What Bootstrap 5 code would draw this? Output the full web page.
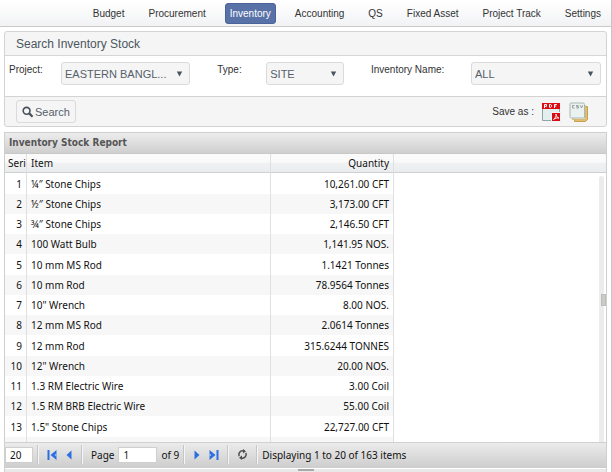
<!DOCTYPE html>
<html lang="en">
<head>
<meta charset="utf-8">
<meta name="viewport" content="width=device-width, initial-scale=1">
<title>Inventory Stock</title>
<link href="https://cdn.jsdelivr.net/npm/bootstrap@5.3.0/dist/css/bootstrap.min.css" rel="stylesheet">
<style>
body{font-family:"Liberation Sans",Arial,sans-serif;font-size:10px;line-height:14px;color:#3c3c3c;background:#fff}
.app{border-right:1px solid #c4c4c4}
.topnav{background:linear-gradient(#fff 10%,#f1f2f4);border-bottom:1px solid #c9c9c9;padding:3px 5px 2px}
.topnav .nav{gap:14px}
.topnav .nav-link{color:#333;padding:3px 4px 2px;border:1px solid transparent;border-radius:3px;line-height:14px}
.topnav .nav-link.active{background:#5872a7;color:#fff;border-color:#4a639a}
.work{padding:4px 4px 0;gap:5px}
.finder{border:1px solid #d3d3d3;border-radius:3px;background:#f5f5f5;color:#333}
.finder h1{font-size:12px;line-height:22px;padding:1px 11px 0;margin:0;font-weight:400;color:#4b5560;border-bottom:1px solid #d6d6d6}
.fields{display:grid;grid-template-columns:210fr 155fr 232fr;background:#fff;padding:6px 5px 11px 4px;border-bottom:1px solid #d3d3d3}
.fields label{padding-top:1px;flex:none}
.l-project{width:52px}.l-type{width:49px}.l-name{width:100px}
.fields select,.btn-find{font-size:11px;line-height:14px;color:#555f6b;border:1px solid #dadada;border-radius:3px;background-color:#f5f5f5}
.fields select{appearance:none;height:23px;padding:0 20px 0 3px;text-overflow:ellipsis;min-width:0;background-repeat:no-repeat;background-position:right 6px center;background-image:url("data:image/svg+xml,%3Csvg xmlns='http://www.w3.org/2000/svg' width='7' height='6'%3E%3Cpath d='M0.8 0.5h5.4L3.5 5.5z' fill='%23475563'/%3E%3C/svg%3E")}
.w-project{width:129px}.w-type{width:78px}
.actions{padding:3px 17px 3px 11px}
.btn-find{padding:3px 5px;height:23px;gap:1px}
.saveas{gap:8px}
.saveas a{line-height:0}
.report{border:1px solid #cfcfcf;border-bottom:0;min-height:0}
.report,.report input{font-family:"Noto Sans",Tahoma,sans-serif;color:#111}
.report h2{font-family:"DejaVu Sans Condensed","DejaVu Sans",sans-serif;font-size:10px;line-height:20px;font-weight:700;margin:0;padding:0 4px;color:#555;background:linear-gradient(#ededed,#cfcfcf);border-bottom:1px solid #c8c8c8}
.rows{overflow:hidden;min-height:0;position:relative}
.stock{table-layout:fixed;width:100%;border-collapse:separate;border-spacing:0}
.stock th,.stock td{padding:0 4px;height:20px;line-height:18px;white-space:nowrap;overflow:hidden;border-right:1px solid #e0e0e0}
.stock td{background:#fff}
.stock th{font-weight:400;height:19px;background:linear-gradient(#fafafa 45%,#f0f1f2 50%,#ebecee);border-bottom:1px solid #d0d0d0}
.stock tbody tr:nth-child(4n+1) td{height:21px}
.stock tbody tr:nth-child(even) td{background:#f7f7f7}
.stock th:last-child,.stock td:last-child{border-right:0}
.stock tbody tr td:last-child{background:#fff}
.stock th.serial{padding:0 0 0 3px}
.c-serial{width:22px}.c-item{width:244px}.c-qty{width:123px}
.track{position:absolute;top:22px;right:2px;bottom:0;width:5px;background:#ececec;border-radius:3px 3px 0 0}
.grip{position:absolute;top:140px;right:0;width:5px;height:12px;background:#cdcbc5;border:1px solid #bfbdb7}
.pager{background:linear-gradient(#ebebeb,#cdcdcd);border-top:1px solid #d0d0d0;padding:2px 1px 4px 0}
.pager input{font-size:10px;line-height:12px;height:16px;padding:0 4px;border:1px solid #cfcfcf;background:#fff}
.pager .size{width:28px}.pager .page{width:39px}
.pager .split{width:2px;height:19px;border-left:1px solid #c6c6c6;border-right:1px solid #f5f5f5}
.pager button{line-height:0;padding:0;border:0;background:none}
.resizer{height:4px;background:#e9e9e9;border-top:1px solid #fff}
.resizer span{width:16px;height:2px;background:#a9a9a9}
</style>
</head>
<body>
<div class="app d-flex flex-column vh-100">
  <nav class="topnav">
    <ul class="nav justify-content-end flex-nowrap">
      <li><a class="nav-link" href="#">Budget</a></li>
      <li><a class="nav-link" href="#">Procurement</a></li>
      <li><a class="nav-link active" href="#" aria-current="page">Inventory</a></li>
      <li><a class="nav-link" href="#">Accounting</a></li>
      <li><a class="nav-link" href="#">QS</a></li>
      <li><a class="nav-link text-nowrap" href="#">Fixed Asset</a></li>
      <li><a class="nav-link text-nowrap" href="#">Project Track</a></li>
      <li><a class="nav-link" href="#">Settings</a></li>
    </ul>
  </nav>
  <main class="work d-flex flex-column flex-fill overflow-hidden">
    <form class="finder">
      <h1>Search Inventory Stock</h1>
      <div class="fields">
        <div class="d-flex align-items-start">
          <label class="l-project" for="project">Project:</label>
          <select id="project" class="w-project"><option>EASTERN BANGL...</option></select>
        </div>
        <div class="d-flex align-items-start">
          <label class="l-type" for="type">Type:</label>
          <select id="type" class="w-type"><option>SITE</option></select>
        </div>
        <div class="d-flex align-items-start">
          <label class="l-name" for="name">Inventory Name:</label>
          <select id="name" class="flex-fill"><option>ALL</option></select>
        </div>
      </div>
      <div class="actions d-flex align-items-center justify-content-between">
        <button type="button" class="btn btn-find d-flex align-items-center">
          <svg width="12" height="12" viewBox="0 0 12 12" aria-hidden="true"><circle cx="4.6" cy="4.8" r="3.4" fill="none" stroke="#46505b" stroke-width="1.6"/><path d="M7.2 7.4l3.4 3.4" stroke="#46505b" stroke-width="2.2"/></svg>
          Search
        </button>
        <div class="saveas d-flex align-items-center">
          <span>Save as :</span>
          <a href="#" aria-label="Save as PDF"><svg width="19" height="20" viewBox="0 0 19 20"><path d="M.5 1.5h17v17h-17z" fill="#e3eeee" stroke="#8ea5a5"/><path d="M0 1h18v6H0z" fill="#dd0d12"/><path d="M2.500 6v-3.500h2v1.800h-2M7.500 5.300v-2.800h1.300l.7.7v1.400l-.7.7zM12.500 6v-3.500h2.300M12.500 4h1.800" fill="none" stroke="#fff" stroke-width="1"/><path d="M9.500 10.500h9v9h-9z" fill="#d90c12" stroke="#f2f5f5"/><path d="M11.500 17.500c2-1.500 3-4 2.500-5.500.3 2.500 1.500 4 3 4-2-.3-4 .2-5.500 1.500z" fill="none" stroke="#fff" stroke-width=".9"/></svg></a>
          <a href="#" aria-label="Save as CSV"><svg width="20" height="20" viewBox="0 0 20 20"><path d="M5.500 4.500h13v13l-2 2h-11z" fill="#e3bd6e" stroke="#c8a04e"/><path d="M3.500 3.500h13v14h-13z" fill="#f7ebca" stroke="#d8ba78"/><path d="M2 1h12q1.500 0 1.500 1.500v13.500H2.500Q1 16 1 14.500V2q0-1 1-1z" fill="#eaf2f0" stroke="#a9b8b6"/><path d="M5.500 3.500H3.500v2.500h2M9.500 3.500H7.500v1.200h2V6H7.300M11.300 3.300l1.200 2.700 1.200-2.700" fill="none" stroke="#8a9795" stroke-width=".9"/></svg></a>
        </div>
      </div>
    </form>
    <section class="report d-flex flex-column flex-fill">
      <h2>Inventory Stock Report</h2>
      <div class="rows flex-fill">
        <table class="stock">
          <colgroup><col class="c-serial"><col class="c-item"><col class="c-qty"><col></colgroup>
          <thead><tr><th class="serial">Seri</th><th>Item</th><th class="text-end">Quantity</th><th></th></tr></thead>
          <tbody>
            <tr><td class="text-end">1</td><td>¼″ Stone Chips</td><td class="text-end">10,261.00 CFT</td><td></td></tr>
            <tr><td class="text-end">2</td><td>½″ Stone Chips</td><td class="text-end">3,173.00 CFT</td><td></td></tr>
            <tr><td class="text-end">3</td><td>¾″ Stone Chips</td><td class="text-end">2,146.50 CFT</td><td></td></tr>
            <tr><td class="text-end">4</td><td>100 Watt Bulb</td><td class="text-end">1,141.95 NOS.</td><td></td></tr>
            <tr><td class="text-end">5</td><td>10 mm MS Rod</td><td class="text-end">1.1421 Tonnes</td><td></td></tr>
            <tr><td class="text-end">6</td><td>10 mm Rod</td><td class="text-end">78.9564 Tonnes</td><td></td></tr>
            <tr><td class="text-end">7</td><td>10" Wrench</td><td class="text-end">8.00 NOS.</td><td></td></tr>
            <tr><td class="text-end">8</td><td>12 mm MS Rod</td><td class="text-end">2.0614 Tonnes</td><td></td></tr>
            <tr><td class="text-end">9</td><td>12 mm Rod</td><td class="text-end">315.6244 TONNES</td><td></td></tr>
            <tr><td class="text-end">10</td><td>12" Wrench</td><td class="text-end">20.00 NOS.</td><td></td></tr>
            <tr><td class="text-end">11</td><td>1.3 RM Electric Wire</td><td class="text-end">3.00 Coil</td><td></td></tr>
            <tr><td class="text-end">12</td><td>1.5 RM BRB Electric Wire</td><td class="text-end">55.00 Coil</td><td></td></tr>
            <tr><td class="text-end">13</td><td>1.5" Stone Chips</td><td class="text-end">22,727.00 CFT</td><td></td></tr>
            <tr><td></td><td></td><td></td><td></td></tr>
          </tbody>
        </table>
        <div class="track"></div>
        <div class="grip"></div>
      </div>
      <div class="pager d-flex align-items-center">
        <input class="size" type="text" value="20" aria-label="Rows per page">
        <div class="split ms-1 me-2"></div>
        <button type="button" class="me-2" aria-label="First page"><svg width="10" height="10" viewBox="0 0 10 10"><path d="M.5 0h2v10h-2zM9.500 0v10L3.500 5z" fill="#2d6fe0"/><path d="M9.500 3.500v3L7.500 5z" fill="#a9c6f5"/></svg></button>
        <button type="button" class="me-2" aria-label="Previous page"><svg width="8" height="10" viewBox="0 0 8 10"><path d="M6.500 .5v9L1.500 5z" fill="#2d6fe0"/></svg></button>
        <div class="split"></div>
        <label for="page" class="ms-2 me-1">Page</label>
        <input class="page" id="page" type="text" value="1">
        <span class="mx-1">of 9</span>
        <div class="split me-2"></div>
        <button type="button" class="me-2" aria-label="Next page"><svg width="8" height="10" viewBox="0 0 8 10"><path d="M1.500 .5v9l5-4.500z" fill="#2d6fe0"/></svg></button>
        <button type="button" class="me-2" aria-label="Last page"><svg width="10" height="10" viewBox="0 0 10 10"><path d="M9.500 0h-2v10h2zM.5 0v10l6-5z" fill="#2d6fe0"/><path d="M.5 3.500v3l2-1.500z" fill="#a9c6f5"/></svg></button>
        <div class="split me-2"></div>
        <button type="button" class="me-2" aria-label="Reload"><svg width="11" height="11" viewBox="0 0 11 11"><path d="M2.200 7.200A3.700 3.700 0 0 1 6.500 2M8.800 3.800A3.700 3.700 0 0 1 4.500 9" fill="none" stroke="#4d4d4d" stroke-width="1.500"/><path d="M6 0l3 2.300L6 4.500zM5 6.500v4.500L2 8.700z" fill="#4d4d4d"/></svg></button>
        <div class="split me-1"></div>
        <span>Displaying 1 to 20 of 163 items</span>
      </div>
      <div class="resizer d-flex justify-content-center"><span></span></div>
    </section>
  </main>
</div>
<script src="https://cdn.jsdelivr.net/npm/bootstrap@5.3.0/dist/js/bootstrap.bundle.min.js"></script>
</body>
</html>
